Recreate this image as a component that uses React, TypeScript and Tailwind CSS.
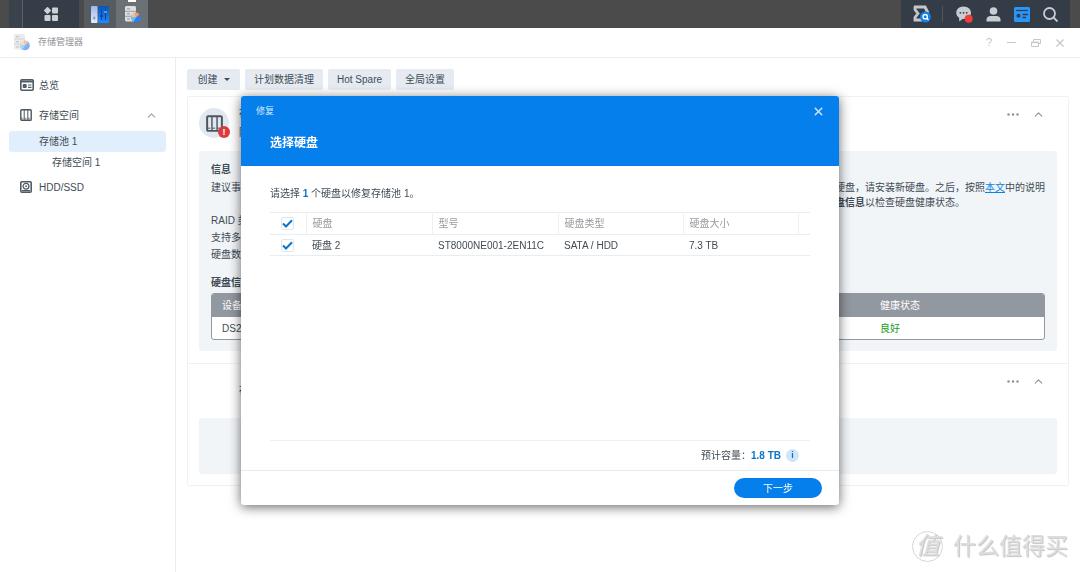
import React from "react";
import { ChevronUp, X } from "lucide-react";

const toolbar = ["创建", "计划数据清理", "Hot Spare", "全局设置"];

const details = ["RAID 类型", "支持多个", "硬盘数量"];

const drives = [
  { name: "硬盘 2", model: "ST8000NE001-2EN11C", type: "SATA / HDD", size: "7.3 TB" },
];

const MenuIcon = () => (
  <svg width="14" height="14" viewBox="0 0 14 14" fill="#cdd0d4">
    <rect x="0.800" y="0.800" width="5.400" height="5.400" rx="0.800" transform="rotate(45 3.500 3.500)" />
    <rect x="8" y="0.500" width="6" height="6" rx="1" />
    <rect x="0.500" y="8" width="6" height="6" rx="1" />
    <rect x="8" y="8" width="6" height="6" rx="1" />
  </svg>
);

const ControlPanelIcon = () => (
  <svg width="18" height="17" viewBox="0 0 18 17">
    <defs>
      <linearGradient id="panel-blue" x1="0" y1="0" x2="0" y2="1">
        <stop offset="0" stopColor="#0b55b5" />
        <stop offset="1" stopColor="#1c8bff" />
      </linearGradient>
      <linearGradient id="panel-light" x1="0" y1="0" x2="0" y2="1">
        <stop offset="0" stopColor="#9db9e6" />
        <stop offset="1" stopColor="#e3ecfb" />
      </linearGradient>
    </defs>
    <rect x="7" width="11" height="17" rx="1" fill="url(#panel-blue)" />
    <rect width="6.500" height="17" rx="1" fill="url(#panel-light)" />
    <rect x="2.300" y="10.500" width="2" height="3" rx="1" fill="#7c97c6" />
    <path d="M10.500 3v11M14.500 3v11" stroke="#0a4299" strokeWidth="1" />
    <rect x="9.200" y="9" width="2.600" height="2" rx="0.500" fill="#0a3f93" />
    <rect x="13.200" y="5" width="2.600" height="2" rx="0.500" fill="#4aa5ff" />
  </svg>
);

const StorageIcon = () => (
  <svg width="17" height="17" viewBox="0 0 17 17">
    <path d="M2 0h9l1 1v4H1V1zM1 5.500h11v4.500H1zM1 10.500h11v5H2l-1-1z" fill="#dcdfe1" />
    <path d="M1 5.200h11M1 10.200h11" stroke="#a8adb1" strokeWidth="0.800" />
    <path d="M3 2.800h3M3 7.800h3M3 13h3" stroke="#8f969b" strokeWidth="1" />
    <circle cx="12" cy="11.500" r="4.800" fill="#2f7df5" />
    <path d="M12 11.500l-1-4.800a4.800 4.800 0 0 1 4.500 1.500z" fill="#f5a04c" />
    <path d="M12 11.500l-4.800 0a4.800 4.800 0 0 0 2.400 4.100z" fill="#57c7e8" />
    <path d="M12 11.500l-4.800 0a4.800 4.800 0 0 1 3.800-4.700z" fill="#f2c09a" />
  </svg>
);

const SupportIcon = () => (
  <svg width="20" height="18" viewBox="0 0 20 18" fill="none">
    <path d="M2 2h11l3 6" stroke="#c3c7cc" strokeWidth="3" />
    <path d="M3 1.500v3l3 4-3 4V15h7" stroke="#c3c7cc" strokeWidth="2.800" />
    <circle cx="13.500" cy="12" r="5.500" fill="#0e80e8" />
    <circle cx="13.200" cy="11.700" r="2.200" stroke="#fff" strokeWidth="1.300" />
    <path d="M14.800 13.300l1.700 1.700" stroke="#fff" strokeWidth="1.300" />
  </svg>
);

const ChatIcon = () => (
  <svg width="17" height="17" viewBox="0 0 17 17">
    <path d="M7.500 0.500C3.300 0.500 0.300 3.300 0.300 6.800c0 2.200 1.100 3.900 2.800 5L3.300 15.500l3.200-2.500c4.800.4 8.500-2.300 8.500-6.200C15 3.300 11.700 0.500 7.500 0.500z" fill="#c9ccd1" />
    <g fill="#343c47">
      <circle cx="4.300" cy="6.800" r="0.900" />
      <circle cx="7.500" cy="6.800" r="0.900" />
      <circle cx="10.700" cy="6.800" r="0.900" />
    </g>
    <circle cx="12.700" cy="12.700" r="4" fill="#f23c3c" />
  </svg>
);

const UserIcon = () => (
  <svg width="15" height="15" viewBox="0 0 15 15" fill="#c9ccd1">
    <circle cx="7.500" cy="4" r="3.800" />
    <path d="M0.500 14.500v-2c0-2 1.500-3.200 3.500-3.500h7c2 .3 3.500 1.500 3.500 3.500v2z" />
  </svg>
);

const WidgetIcon = () => (
  <svg width="16" height="15" viewBox="0 0 16 15">
    <rect width="16" height="15" rx="1.500" fill="#2a96f5" />
    <path d="M2 3.500h12" stroke="#2c3e55" strokeWidth="1.200" />
    <circle cx="4.500" cy="8.800" r="2" fill="#2c3e55" />
    <path d="M8.500 7.500H14M8.500 10.500H12" stroke="#2c3e55" strokeWidth="1.500" />
  </svg>
);

const SearchIcon = () => (
  <svg width="15" height="15" viewBox="0 0 15 15" fill="none" stroke="#c9ccd1" strokeWidth="1.800">
    <circle cx="6.500" cy="6.500" r="5.500" />
    <path d="M10.500 10.500l4 4" />
  </svg>
);

const OverviewIcon = () => (
  <svg width="14" height="12" viewBox="0 0 14 12">
    <rect x="0.800" y="0.800" width="12.400" height="10.400" rx="1" fill="#fff" stroke="#525c67" strokeWidth="1.600" />
    <path d="M1 2.500h12" stroke="#525c67" strokeWidth="2" />
    <rect x="2.700" y="5" width="4" height="4" rx="1" fill="#525c67" />
    <path d="M8 6h3.500M8 8.300h3.500" stroke="#525c67" strokeWidth="1.200" />
  </svg>
);

const VolumeIcon = ({ size = 12 }: { size?: number }) => (
  <svg width={size} height={size} viewBox="0 0 12 12" fill="none" stroke="#4c5661">
    <rect x="0.800" y="0.800" width="10.400" height="10.400" rx="0.800" strokeWidth="1.400" />
    <path d="M4.200 1v10M7.800 1v10" strokeWidth="1" />
    <path d="M1 9.300h10" strokeWidth="0.700" strokeDasharray="2 1.500" />
  </svg>
);

const DiskIcon = () => (
  <svg width="12" height="12" viewBox="0 0 12 12">
    <rect x="0.800" y="0.800" width="10.400" height="10.400" rx="1" fill="#fff" stroke="#525c67" strokeWidth="1.600" />
    <circle cx="6" cy="5.200" r="2.900" fill="none" stroke="#525c67" strokeWidth="1.300" />
    <circle cx="6" cy="5.200" r="0.900" fill="#525c67" />
    <path d="M2 9.700h8" stroke="#525c67" strokeWidth="1.400" />
  </svg>
);

const Dots = () => (
  <svg width="12" height="3" viewBox="0 0 12 3" fill="#8c9197">
    <circle cx="1.500" cy="1.500" r="1.200" />
    <circle cx="6" cy="1.500" r="1.200" />
    <circle cx="10.500" cy="1.500" r="1.200" />
  </svg>
);

const Taskbar = () => (
  <header className="flex h-7 justify-between bg-[#4b4b4b]">
    <div className="flex">
      <div className="ml-[9px] w-[13px] bg-[#3a434c]" />
      <button aria-label="主菜单" className="flex w-[57px] items-center justify-center border-l border-[#59616a] bg-[#353e48]">
        <MenuIcon />
      </button>
      <button aria-label="控制面板" className="ml-[5px] flex w-8 items-center justify-center bg-[#565c62]">
        <ControlPanelIcon />
      </button>
      <button aria-label="存储管理器" className="relative flex w-8 items-center justify-center bg-[#6c7175]">
        <span className="absolute left-3 top-0 h-0.5 w-2 bg-white" />
        <StorageIcon />
      </button>
    </div>
    <div className="mr-[10px] flex items-center gap-[13px] bg-[#343c47] pl-[11px] pr-3">
      <button aria-label="支持"><SupportIcon /></button>
      <span className="-ml-[3px] h-4 w-px bg-[#4e5762]" />
      <button aria-label="通知"><ChatIcon /></button>
      <button aria-label="用户"><UserIcon /></button>
      <button aria-label="小组件"><WidgetIcon /></button>
      <button aria-label="搜索"><SearchIcon /></button>
    </div>
  </header>
);

const TitleBar = () => (
  <div className="flex h-[30px] items-center justify-between border-b border-[#ececee] pl-[13px] pr-4">
    <div className="flex items-center gap-2 text-[9px] text-[#8f9397]">
      <span className="opacity-60"><StorageIcon /></span>
      <span>存储管理器</span>
    </div>
    <div className="flex items-center gap-[15px] text-[#c4c6c8]">
      <button aria-label="帮助" className="text-[11px]">?</button>
      <button aria-label="最小化">
        <svg width="9" height="9" viewBox="0 0 9 9" stroke="currentColor"><path d="M0 4.500h9" /></svg>
      </button>
      <button aria-label="还原">
        <svg width="10" height="8" viewBox="0 0 10 8" fill="none" stroke="currentColor">
          <path d="M2.500 2.500v-2h7v4h-2M0.500 3h7v4.500h-7zM0.500 3.700h7" />
        </svg>
      </button>
      <button aria-label="关闭">
        <svg width="8" height="8" viewBox="0 0 8 8" stroke="currentColor" strokeWidth="1.300"><path d="M0.500 0.500l7 7M7.500 0.500l-7 7" /></svg>
      </button>
    </div>
  </div>
);

const Sidebar = () => (
  <nav className="w-44 shrink-0 border-r border-[#ececee] px-[9px] pt-[17px]">
    <a href="#overview" className="flex h-5 items-center pl-[11px]">
      <span className="w-[19px]"><OverviewIcon /></span>总览
    </a>
    <a href="#storage" className="mt-[10px] flex h-5 items-center pl-[11px] pr-2">
      <span className="w-[19px]"><VolumeIcon /></span>
      <span className="flex-1">存储空间</span>
      <ChevronUp size={13} className="text-[#9a9fa4]" />
    </a>
    <a href="#pool-1" className="mt-[6px] flex h-[21px] items-center rounded-[3px] bg-[#e1eefb] pl-[30px]">存储池 1</a>
    <a href="#volume-1" className="flex h-5 items-center pl-[43px]">存储空间 1</a>
    <a href="#drives" className="mt-[5px] flex h-5 items-center pl-[11px]">
      <span className="w-[19px]"><DiskIcon /></span>HDD/SSD
    </a>
  </nav>
);

const SectionActions = () => (
  <div className="ml-auto flex h-3 items-center gap-[13px] pr-3">
    <button aria-label="更多"><Dots /></button>
    <button aria-label="收起"><ChevronUp size={13} className="text-[#8c9197]" /></button>
  </div>
);

const PoolPanel = () => (
  <div className="rounded-[3px] bg-[#f2f5f8] px-3 pb-[11px] pt-[11px] leading-[15px]">
    <h2 className="font-bold">信息</h2>
    <div className="mt-[3px] flex justify-between">
      <span>建议事项</span>
      <p className="whitespace-nowrap">
        硬盘，请安装新硬盘。之后，按照<a href="#article" className="text-[#0a84dd] underline">本文</a>中的说明
        <br />
        <b>盘信息</b>以检查硬盘健康状态。
      </p>
    </div>
    <ul className="mt-[3px] space-y-[2px]">
      {details.map((label) => (
        <li key={label}>{label}</li>
      ))}
    </ul>
    <h2 className="mt-[13px] font-bold">硬盘信息</h2>
    <div className="mt-[3px] overflow-hidden rounded-[3px] border border-[#92989f] bg-white">
      <table className="w-full table-fixed text-left">
        <thead className="bg-[#92989f] text-white">
          <tr className="h-[23px]">
            <th className="pl-[10px] font-normal">设备</th>
            <th className="w-[164px] font-normal">健康状态</th>
          </tr>
        </thead>
        <tbody>
          <tr className="h-[22px]">
            <td className="pl-[10px]">DS220+</td>
            <td className="text-[#1b9c1b]">良好</td>
          </tr>
        </tbody>
      </table>
    </div>
  </div>
);

const Content = () => (
  <main className="min-w-0 flex-1 pb-3 pl-[11px] pr-[11px] pt-[11px]">
    <div className="flex gap-[5px]">
      {toolbar.map((label, index) => (
        <button key={label} className="flex h-[21px] min-w-[53px] items-center justify-center rounded-[2px] bg-[#e6ebf2] px-[9px]">
          {label}
          {index === 0 && <span className="ml-[6px] border-x-[3px] border-t-[3px] border-x-transparent border-t-[#414b55]" />}
        </button>
      ))}
    </div>

    <div className="mt-[6px] rounded-[2px] border border-[#f0f1f3]">
      <section className="px-[11px] pb-3">
        <div className="flex h-[54px] pt-[11px]">
          <div className="relative flex size-[30px] items-center justify-center rounded-full bg-[#e3e8ee]">
            <VolumeIcon size={17} />
            <span className="absolute -right-px bottom-0 flex size-3 items-center justify-center rounded-full bg-[#de3a3f] text-[9px] font-bold leading-none text-white">!</span>
          </div>
          <div className="ml-[10px] leading-[19px]">
            <div className="-mt-1">存储池 1</div>
            <div>降级</div>
          </div>
          <SectionActions />
        </div>
        <PoolPanel />
      </section>
      <section className="border-t border-[#f0f1f3] px-[11px] pb-[11px]">
        <div className="flex h-[54px] pl-10 pt-[11px]">
          <span className="pt-2">存储空间 1</span>
          <SectionActions />
        </div>
        <div className="h-14 rounded-[3px] bg-[#f2f5f8]" />
      </section>
    </div>
  </main>
);

const Tick = ({ label }: { label: string }) => (
  <label className="mx-auto grid size-[13px] place-items-center">
    <input
      type="checkbox"
      defaultChecked
      aria-label={label}
      className="peer col-start-1 row-start-1 size-[13px] appearance-none rounded-[2px] border border-[#dfe6ee] bg-white"
    />
    <svg className="invisible col-start-1 row-start-1 peer-checked:visible" width="11" height="9" viewBox="0 0 11 9" fill="none" stroke="#0f74c8" strokeWidth="2">
      <path d="M1 4.500l3 3 6-6.300" />
    </svg>
  </label>
);

const RepairDialog = () => (
  <div className="fixed inset-0 flex items-start justify-center pt-24">
    <div
      role="dialog"
      aria-labelledby="repair-title"
      className="w-[598px] overflow-hidden rounded-[3px] bg-white shadow-[0_2px_12px_rgba(0,0,0,0.6)]"
    >
      <div className="h-[70px] bg-[#057feb] pl-[15px] pr-[14px] pt-2 text-white">
        <div className="flex h-[15px] items-center justify-between">
          <span className="text-[9px] text-[#d5e9fc]">修复</span>
          <button aria-label="关闭"><X size={13} strokeWidth={3} className="text-[#c4e0fb]" /></button>
        </div>
        <h1 id="repair-title" className="mt-[15px] pl-[14px] text-[12px] font-bold leading-[18px]">选择硬盘</h1>
      </div>

      <div className="px-[29px] pt-5">
        <p className="leading-[15px]">
          请选择 <b className="text-[#0f74c8]">1</b> 个硬盘以修复存储池 1。
        </p>
        <div className="mt-[11px] h-[229px] border-b border-[#eef1f3]">
          <table className="w-full table-fixed border-t border-[#e9edf0] text-left">
            <thead className="text-[#979ca1]">
              <tr className="h-[22px] border-b border-[#e9edf0]">
                <th className="w-9"><Tick label="全选" /></th>
                <th className="w-[126px] border-l border-[#eef1f3] pl-[6px] font-normal">硬盘</th>
                <th className="w-[126px] border-l border-[#eef1f3] pl-[6px] font-normal">型号</th>
                <th className="w-[125px] border-l border-[#eef1f3] pl-[6px] font-normal">硬盘类型</th>
                <th className="border-l border-[#eef1f3] pl-[6px] font-normal">硬盘大小</th>
                <th className="w-3 border-l border-[#eef1f3]" />
              </tr>
            </thead>
            <tbody>
              {drives.map((drive) => (
                <tr key={drive.name} className="h-[21px] border-b border-[#e9edf0]">
                  <td className="pr-px"><Tick label={drive.name} /></td>
                  <td className="pl-[6px]">{drive.name}</td>
                  <td className="whitespace-nowrap pl-[6px]">{drive.model}</td>
                  <td className="pl-[6px]">{drive.type}</td>
                  <td className="pl-[6px]">{drive.size}</td>
                  <td />
                </tr>
              ))}
            </tbody>
          </table>
        </div>
        <div className="flex h-[29px] items-center justify-end pr-[11px]">
          <span>预计容量：</span>
          <b className="text-[#0f74c8]">1.8 TB</b>
          <span className="ml-[5px] flex size-[13px] items-center justify-center rounded-full bg-[#cfe5f9] text-[9px] font-bold text-[#0f74c8]">i</span>
        </div>
      </div>

      <div className="flex justify-end border-t border-[#e3ebef] pb-[7px] pr-[17px] pt-[7px]">
        <button className="h-5 w-[88px] rounded-full bg-[#057feb] text-[10px] text-white">下一步</button>
      </div>
    </div>
  </div>
);

const Watermark = () => (
  <div className="pointer-events-none fixed bottom-2 right-3 flex items-center gap-[10px] text-[#dedede] [text-shadow:1px_1px_1px_#c2c2c2]">
    <span className="flex size-[31px] items-center justify-center rounded-full border border-[#d6d6d6] text-[24px] italic leading-none">值</span>
    <span className="text-[23px] leading-9">什么值得买</span>
  </div>
);

const App = () => {
  return (
    <div className="flex min-h-screen flex-col bg-white font-['Liberation_Sans','Noto_Sans_CJK_SC',sans-serif] text-[10px] text-[#414b55]">
      <Taskbar />
      <TitleBar />
      <div className="flex flex-1">
        <Sidebar />
        <Content />
      </div>
      <RepairDialog />
      <Watermark />
    </div>
  );
};

export default App;
